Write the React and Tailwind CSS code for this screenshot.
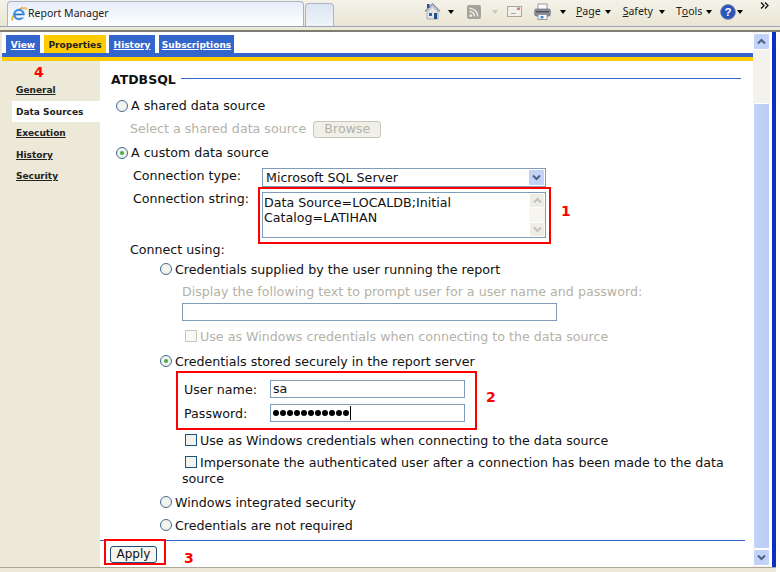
const VERDANA = "font-['DejaVu_Sans',Verdana,sans-serif]"

function IeLogo() {
  return (
    <svg width="16" height="16" viewBox="0 0 16 16" className="mr-px shrink-0">
      <path d="M1 14.5C1 10 5 4 12 1.5" fill="none" stroke="#e8a33a" strokeWidth="1.6" />
      <circle cx="8" cy="8.5" r="5.8" fill="#3f8fdc" />
      <circle cx="8" cy="8.5" r="3.6" fill="#eaf5fd" />
      <rect x="4" y="7.6" width="8" height="1.7" fill="#2a6fc0" />
      <rect x="10" y="9.3" width="4" height="2.2" fill="#eaf5fd" />
      <path d="M12 2.5c2-1 3.5-1 3 1.5" fill="none" stroke="#e8a33a" strokeWidth="1.2" />
    </svg>
  )
}

function Caret({ className = 'ml-[7px]', light }) {
  return <span className={`h-0 w-0 border-x-[3.5px] border-t-[4px] border-x-transparent ${className} ${light ? 'border-t-[#c9c7bc]' : 'border-t-black'}`} />
}

function HomeIcon() {
  return (
    <svg width="17" height="17" viewBox="0 0 17 17">
      <path d="M1 8.5 8.5 1 16 8.5" fill="none" stroke="#8a93a8" strokeWidth="1.5" />
      <path d="M3 8.5 8.5 3.5 14 8.5V16H3Z" fill="#e4e4e0" stroke="#8f94a0" strokeWidth=".7" />
      <rect x="3" y="1" width="2.5" height="4" fill="#2f4fb0" />
      <rect x="5" y="10" width="3" height="3" fill="#3a5fa8" />
      <rect x="10" y="10" width="3" height="6" fill="#1f4d96" />
    </svg>
  )
}

function RssIcon() {
  return (
    <svg width="14" height="14" viewBox="0 0 14 14">
      <rect width="14" height="14" rx="2" fill="#a3a39c" />
      <circle cx="3.8" cy="10.4" r="1.5" fill="#e8e8e2" />
      <path d="M2.4 6.4a5.2 5.2 0 0 1 5.2 5.2M2.4 3.2a8.4 8.4 0 0 1 8.4 8.4" fill="none" stroke="#e8e8e2" strokeWidth="1.6" />
    </svg>
  )
}

function MailIcon() {
  return (
    <svg width="15" height="11" viewBox="0 0 15 11">
      <rect x=".5" y=".5" width="14" height="10" fill="#f1f0ea" stroke="#a9a9a2" />
      <rect x="10" y="1.5" width="3" height="2.5" fill="#e07a7a" />
      <rect x="4" y="7" width="5" height="1" fill="#a9a9a2" />
    </svg>
  )
}

function PrintIcon() {
  return (
    <svg width="17" height="17" viewBox="0 0 17 17">
      <rect x="4" y="1" width="9" height="6" fill="#fbfbfb" stroke="#7d8590" strokeWidth=".8" />
      <rect x=".7" y="6" width="15.6" height="7" rx="1.5" fill="#8a8f98" stroke="#5f656e" strokeWidth=".6" />
      <rect x="2" y="8" width="13" height="1.4" fill="#4b5058" />
      <rect x="4" y="11.5" width="9" height="5" fill="#fbfbfb" stroke="#7d8590" strokeWidth=".8" />
      <rect x="6.5" y="13" width="3" height="2.5" fill="#4a90c8" />
    </svg>
  )
}

function HelpIcon() {
  return (
    <svg width="16" height="16" viewBox="0 0 16 16">
      <circle cx="8" cy="8" r="7.5" fill="#2b55bd" stroke="#8d96ab" />
      <text x="8" y="12.2" textAnchor="middle" fontSize="11.5" fontWeight="700" fill="#fff" fontFamily="Liberation Sans, sans-serif">?</text>
    </svg>
  )
}

function MenuItem({ before, u, after, className, caret = 'ml-[4px]' }) {
  return (
    <span className={`flex items-center ${className}`}>
      {before}<span className="underline">{u}</span>{after}
      <Caret className={caret} />
    </span>
  )
}

function BrowserBar() {
  return (
    <div className="flex h-[26px] bg-gradient-to-b from-[#f4f2e8] to-[#e9e6d4] pl-[7px] pt-px">
      <div className="flex w-[297px] items-center rounded-t-[4px] border border-b-0 border-[#a9b4c6] bg-gradient-to-b from-[#e6eef9] to-[#ffffff] pl-[3px] font-['Noto_Sans',sans-serif] text-[10.5px] text-[#222]">
        <IeLogo />
        Report Manager
      </div>
      <div className="mt-[2px] ml-px w-[29px] rounded-t-[4px] border border-b-0 border-[#a9b4c6] bg-gradient-to-b from-[#dbe5f3] to-[#f0f4fa]" />
      <div className="relative flex flex-1 items-center pl-[90px] pb-[4px] font-['Noto_Sans',sans-serif] text-[10.5px] text-[#222]">
        <HomeIcon />
        <Caret />
        <span className="ml-[13px]"><RssIcon /></span>
        <Caret light className="ml-[11px]" />
        <span className="ml-[9px]"><MailIcon /></span>
        <span className="ml-[12px]"><PrintIcon /></span>
        <Caret className="ml-[9px]" />
        <MenuItem className="ml-[10px]" u="P" after="age" />
        <MenuItem className="ml-[12px]" u="S" after="afety" caret="ml-[6px]" />
        <MenuItem className="ml-[11px]" before="T" u="o" after="ols" caret="ml-[4px]" />
        <span className="ml-[8px]"><HelpIcon /></span>
        <Caret className="ml-px" />
        <svg width="9" height="7" viewBox="0 0 9 7" className="absolute top-[1px] left-[426px]">
          <path d="M1 .5 4 3.5 1 6.5M5 .5 8 3.5 5 6.5" fill="none" stroke="#111" strokeWidth="1.3" />
        </svg>
      </div>
    </div>
  )
}

function ScrollButton({ down }) {
  return (
    <div className="flex h-[17px] items-center justify-center rounded-[2px] border border-white bg-[#c3d3f7]">
      <svg width="9" height="7" viewBox="0 0 9 7">
        <path d={down ? 'M1 1.5 4.5 5 8 1.5' : 'M1 5.5 4.5 2 8 5.5'} fill="none" stroke="#4d6185" strokeWidth="2" />
      </svg>
    </div>
  )
}

function Scrollbar() {
  return (
    <div className="flex w-[17px] shrink-0 flex-col bg-[#f3f2ec] py-px">
      <ScrollButton />
      <div className="mt-[53px] flex-1 rounded-[2px] border border-white bg-gradient-to-r from-[#c3d3f7] to-[#bccdf4]" />
      <ScrollButton down />
    </div>
  )
}

function Tab({ label, active, className }) {
  return (
    <span className={`flex h-[18px] items-center justify-center pt-[3px] text-[9px] font-bold ${className} ${active ? 'bg-[#ffcc00] text-[#222]' : 'bg-[#3366cc] text-white underline'}`}>
      {label}
    </span>
  )
}

function SideLink({ label, active }) {
  return (
    <div className={`flex h-[21.5px] items-center pt-[2px] pl-[4px] text-[9px] font-bold text-[#222] ${active ? 'bg-white' : 'underline'}`}>
      {label}
    </div>
  )
}

function Sidebar() {
  return (
    <div className="w-[98px] shrink-0 bg-[#ece9d8] pt-[18px] pl-[10px]">
      <SideLink label="General" />
      <SideLink label="Data Sources" active />
      <SideLink label="Execution" />
      <SideLink label="History" />
      <SideLink label="Security" />
    </div>
  )
}

function Radio({ checked, raised }) {
  return (
    <span className={`mr-[3px] flex h-[12px] w-[12px] shrink-0 items-center justify-center rounded-full border border-[#3f6a96] bg-[#f4f4ee] ${raised ? 'mt-[-2px]' : ''}`}>
      {checked && <span className="h-[4px] w-[4px] rounded-full bg-[#3fae4a]" />}
    </span>
  )
}

function Check({ off }) {
  return <span className={`mt-[-2px] mr-[3px] h-[12px] w-[12px] shrink-0 border ${off ? 'border-[#cac8bb] bg-[#f8f8f4]' : 'border-[#1c5180] bg-[#f4f4ee]'}`} />
}

function Field({ className, children }) {
  return (
    <div className={`flex items-center border border-[#7f9db9] bg-white pl-[2px] ${className}`}>
      {children}
    </div>
  )
}

function Form() {
  return (
    <div className="flex-1 pt-[8px] text-[12.65px] leading-[16px] text-[#111]">
      <div className="ml-[11px] flex h-[20px] items-center pt-[1px] text-[12.5px] font-bold">
        ATDBSQL
        <span className="mt-[-2px] ml-[5px] h-px w-[560px] bg-[#3366cc]" />
      </div>

      <div className="mt-[9px] ml-[16px] flex h-[16px] items-center"><Radio />A shared data source</div>
      <div className="mt-[6px] ml-[30px] flex h-[18px] items-center text-[#b4b2a7]">
        Select a shared data source
        <span className="ml-[7px] flex h-[17px] w-[68px] items-center justify-center rounded-[3px] border border-[#c9c7ba] bg-[#f1f0e8]">Browse</span>
      </div>
      <div className="mt-[7px] ml-[16px] flex h-[16px] items-center"><Radio checked />A custom data source</div>

      <div className="mt-[6px] ml-[33px] flex h-[21px]">
        <span className="w-[129px] pt-[1px]">Connection type:</span>
        <div className="relative mt-[1px] flex h-[19px] w-[284px] items-center border border-[#7f9db9] pl-[3px]">
          Microsoft SQL Server
          <span className="absolute top-px right-px flex h-[15px] w-[15px] items-center justify-center rounded-[1px] bg-[#c3d3f7]">
            <svg width="9" height="7" viewBox="0 0 9 7"><path d="M1 1.5 4.5 5 8 1.5" fill="none" stroke="#4d6185" strokeWidth="2" /></svg>
          </span>
        </div>
      </div>
      <div className="mt-[4px] ml-[33px] flex h-[46px]">
        <span className="mt-[-1px] w-[129px]">Connection string:</span>
        <div className="flex w-[284px] border border-[#7f9db9]">
          <div className="flex-1 pt-[2px] pl-[1px] leading-[15px]">Data Source=LOCALDB;Initial<br />Catalog=LATIHAN</div>
          <div className="flex w-[16px] flex-col justify-between bg-[#f6f5ef]">
            <div className="flex h-[15px] items-center justify-center rounded-[2px] border border-white bg-[#eeede5]">
              <svg width="9" height="7" viewBox="0 0 9 7"><path d="M1 5.5 4.5 2 8 5.5" fill="none" stroke="#c3c3bb" strokeWidth="2" /></svg>
            </div>
            <div className="flex h-[15px] items-center justify-center rounded-[2px] border border-white bg-[#eeede5]">
              <svg width="9" height="7" viewBox="0 0 9 7"><path d="M1 1.5 4.5 5 8 1.5" fill="none" stroke="#c3c3bb" strokeWidth="2" /></svg>
            </div>
          </div>
        </div>
      </div>

      <div className="mt-[3px] ml-[30px] h-[16px] pt-px">Connect using:</div>
      <div className="mt-[4px] ml-[60px] flex h-[16px] items-center pt-[2px]"><Radio raised />Credentials supplied by the user running the report</div>
      <div className="mt-[6px] ml-[82px] h-[16px] pt-px text-[#b4b2a7]">Display the following text to prompt user for a user name and password:</div>
      <div className="mt-[4px] ml-[82px] h-[18px] w-[375px] border border-[#7f9db9]" />
      <div className="mt-[7px] ml-[85px] flex h-[16px] items-center pt-[2px] text-[#b4b2a7]"><Check off />Use as Windows credentials when connecting to the data source</div>

      <div className="mt-[9px] ml-[60px] flex h-[16px] items-center pt-[2px]"><Radio checked raised />Credentials stored securely in the report server</div>
      <div className="mt-[11px] ml-[84px] flex h-[18px] items-center">
        <span className="w-[86px] pt-[2px]">User name:</span>
        <Field className="h-[18px] w-[195px]">sa</Field>
      </div>
      <div className="mt-[6px] ml-[84px] flex h-[18px] items-center">
        <span className="w-[86px] pt-[2px]">Password:</span>
        <Field className="h-[18px] w-[195px]">
          <span className="flex gap-[1px]">
            {Array.from({ length: 11 }).map((_, i) => <span key={i} className="h-[6px] w-[6px] rounded-full bg-black" />)}
          </span>
          <span className="ml-px h-[14px] w-px bg-black" />
        </Field>
      </div>
      <div className="mt-[10px] ml-[85px] flex h-[16px] items-center pt-[2px]"><Check />Use as Windows credentials when connecting to the data source</div>
      <div className="mt-[6px] ml-[85px] flex h-[16px] items-center whitespace-nowrap pt-[2px]"><Check />Impersonate the authenticated user after a connection has been made to the data</div>
      <div className="ml-[82px] h-[16px] pt-px">source</div>
      <div className="mt-[8px] ml-[60px] flex h-[16px] items-center pt-[2px]"><Radio raised />Windows integrated security</div>
      <div className="mt-[7px] ml-[60px] flex h-[16px] items-center pt-[2px]"><Radio raised />Credentials are not required</div>

      <div className="mt-[7px] h-px w-[645px] bg-[#3366cc]" />
      <div className="mt-[5px] ml-[10px] flex h-[17px] w-[47px] items-center justify-center rounded-[3px] border border-[#1f4e79] bg-[#f6f5ee] pb-px text-[12px]">Apply</div>
    </div>
  )
}

function Annotations() {
  return (
    <>
      <div className="absolute top-[187px] left-[258px] h-[57px] w-[293px] border-[2px] border-[#ff0000]" />
      <div className="absolute top-[371px] left-[176px] h-[59px] w-[301px] border-[2px] border-[#ff0000]" />
      <div className="absolute top-[539px] left-[104px] h-[26px] w-[62px] border-[2px] border-[#ff0000]" />
      <span className="absolute top-[203px] left-[561px] text-[14px] leading-[16px] font-bold text-[#ff0000]">1</span>
      <span className="absolute top-[389px] left-[486px] text-[14px] leading-[16px] font-bold text-[#ff0000]">2</span>
      <span className="absolute top-[550px] left-[184px] text-[14px] leading-[16px] font-bold text-[#ff0000]">3</span>
      <span className="absolute top-[64px] left-[34px] text-[14px] leading-[16px] font-bold text-[#ff0000]">4</span>
    </>
  )
}

export default function App() {
  return (
    <div className={`relative h-[572px] w-[780px] overflow-hidden bg-white ${VERDANA}`}>
      <BrowserBar />
      <div className="h-[4px] border-t border-[#98a3b5] bg-[#ece9d8]" />
      <div className="h-[2px] bg-[#7f7d70]" />
      <div className="flex h-[535px] w-[776px] border-l-[2px] border-[#ece9d8]">
        <div className="flex min-w-0 flex-1 flex-col">
          <div className="flex h-[21px] items-end pl-[4px]">
            <Tab label="View" className="w-[34px]" />
            <Tab label="Properties" active className="ml-[4px] w-[62px]" />
            <Tab label="History" className="ml-[3px] w-[46px]" />
            <Tab label="Subscriptions" className="ml-[4px] w-[75px]" />
          </div>
          <div className="h-[4px] shrink-0 bg-[#3366cc]" />
          <div className="h-[4px] shrink-0 bg-[#ffcc00]" />
          <div className="flex min-h-0 flex-1">
            <Sidebar />
            <Form />
          </div>
        </div>
        <Scrollbar />
        <div className="ml-[2px] w-[4px] bg-[#0a2fc4]" />
      </div>
      <div className="h-[5px] w-[776px] border-t border-[#aca899] bg-[#ece9d8]" />
      <Annotations />
    </div>
  )
}
